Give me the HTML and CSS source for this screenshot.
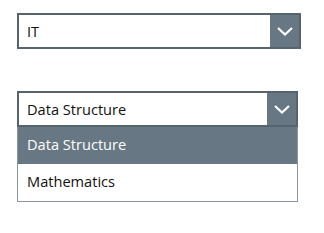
FILE: index.html
```html
<!DOCTYPE html>
<html lang="en">
<head>
  <meta charset="UTF-8">
  <title>Dropdowns</title>
  <link rel="stylesheet" href="styles.css">
</head>
<body>
  <div class="page">
    <div class="select select-first">
      <span class="value">IT</span>
      <span class="arrow">
        <svg width="16" height="9" viewBox="0 0 16 9"><path d="M1 1 L8 7.5 L15 1" fill="none" stroke="#fff" stroke-width="2.2"/></svg>
      </span>
    </div>

    <div class="combo">
      <div class="select">
        <span class="value">Data Structure</span>
        <span class="arrow">
          <svg width="16" height="9" viewBox="0 0 16 9"><path d="M1 1 L8 7.5 L15 1" fill="none" stroke="#fff" stroke-width="2.2"/></svg>
        </span>
      </div>
      <ul class="options">
        <li class="active">Data Structure</li>
        <li>Mathematics</li>
      </ul>
    </div>
  </div>
</body>
</html>
```

FILE: styles.css
```css
body {
  margin: 0;
  background: #ffffff;
  font-family: "Open Sans", "Noto Sans", Arial, sans-serif;
  font-size: 14.6px;
  color: #111;
}

.page {
  padding: 13px 0 0 17px;
  display: flex;
  flex-direction: column;
  gap: 42px;
}

.select {
  display: flex;
  align-items: stretch;
  height: 36px;
  box-sizing: border-box;
  border: 2px solid #56646e;
  background: #fff;
}

.select-first {
  width: 284px;
}

.combo {
  width: 281px;
}

.value {
  flex: 1;
  display: flex;
  align-items: center;
  padding-left: 8px;
  padding-bottom: 1px;
}

.arrow {
  width: 29px;
  background: #677783;
  display: flex;
  align-items: center;
  justify-content: center;
}

.options {
  list-style: none;
  margin: 0;
  padding: 0;
  border: 1px solid #8c969d;
  border-top: none;
}

.options li {
  height: 37px;
  box-sizing: border-box;
  display: flex;
  align-items: center;
  padding: 0 0 3px 9px;
}

.options li.active {
  background: #677783;
  color: #fff;
}
```
